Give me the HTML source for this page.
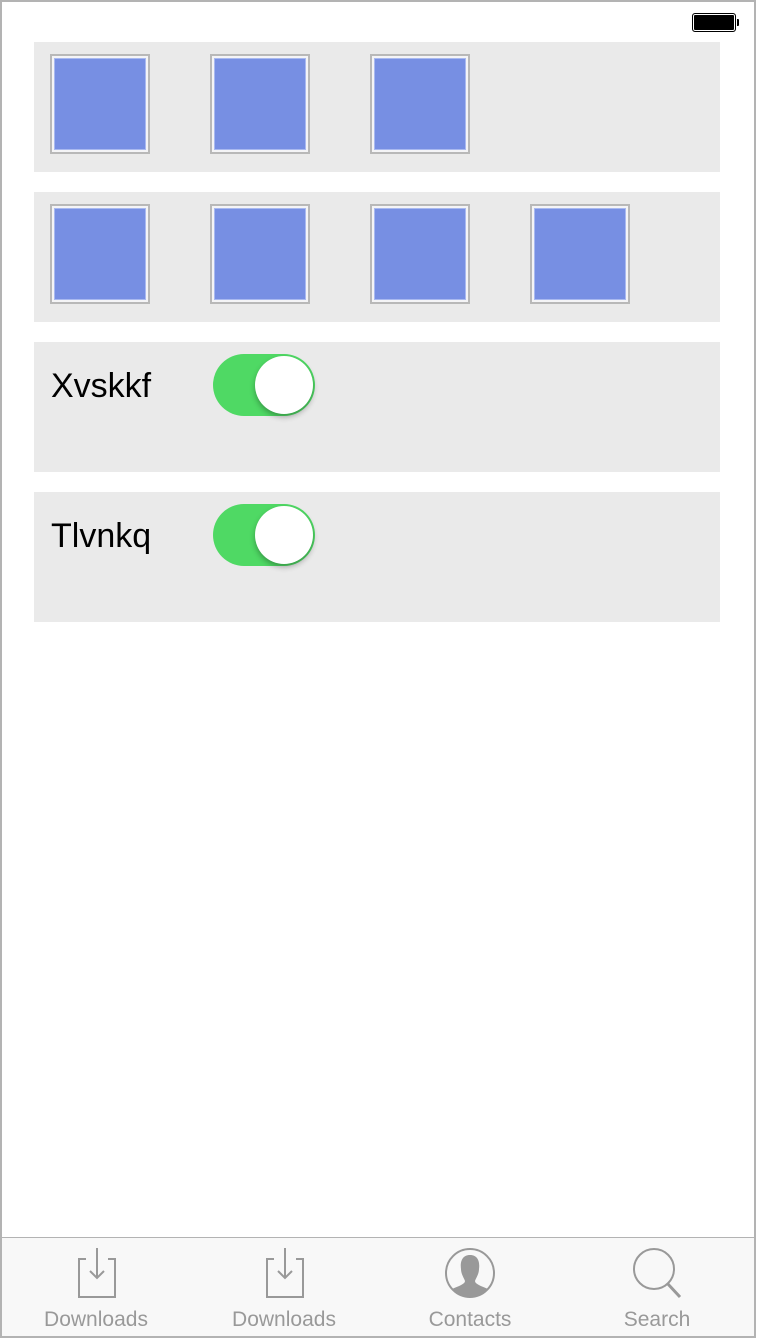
<!DOCTYPE html>
<html><head><style>
*{margin:0;padding:0;box-sizing:border-box}
body{width:760px;height:1340px;background:#fff;font-family:"Liberation Sans",sans-serif;position:relative;overflow:hidden}
.frame{position:absolute;left:0;top:0;width:756px;height:1338px;border:2px solid #b3b3b3}
.panel{position:absolute;left:34px;width:686px;height:130px;background:#eaeaea}
.sq{position:absolute;width:100px;height:100px;border:2px solid #b8b8b8;background:#f4f4f6;padding:2px}
.sq div{width:100%;height:100%;background:#778fe3;border:1px solid #a9b9f0}
.lbl{position:absolute;left:17px;top:25px;font-size:34px;color:#000}
.tog{position:absolute;left:179px;top:12px;width:102px;height:62px;border-radius:31px;background:#4fd964}
.knob{position:absolute;right:2px;top:2px;width:58px;height:58px;border-radius:50%;background:#fff;box-shadow:0 3px 6px rgba(0,0,0,.3)}
.tab{position:absolute;left:2px;top:1237px;width:752px;height:99px;background:#f8f8f8;border-top:1px solid #b3b3b3}
.t{position:absolute;top:70px;width:160px;margin-left:-80px;text-align:center;font-size:21px;color:#999}
.batt{position:absolute;left:692px;top:13px;width:44px;height:19px;border:1px solid #000;border-radius:3px;background:#000;box-shadow:inset 0 0 0 1px #fff}
.batt:after{content:"";position:absolute;right:-4px;top:5px;width:2px;height:7px;background:#000;border-radius:0 1px 1px 0}
</style></head><body>
<div class="frame"></div>
<div class="batt"></div>
<div class="panel" style="top:42px">
<div class="sq" style="left:16px;top:12px"><div></div></div>
<div class="sq" style="left:176px;top:12px"><div></div></div>
<div class="sq" style="left:336px;top:12px"><div></div></div>
</div>
<div class="panel" style="top:192px">
<div class="sq" style="left:16px;top:12px"><div></div></div>
<div class="sq" style="left:176px;top:12px"><div></div></div>
<div class="sq" style="left:336px;top:12px"><div></div></div>
<div class="sq" style="left:496px;top:12px"><div></div></div>
</div>
<div class="panel" style="top:342px"><div class="lbl">Xvskkf</div><div class="tog"><div class="knob"></div></div></div>
<div class="panel" style="top:492px"><div class="lbl">Tlvnkq</div><div class="tog"><div class="knob"></div></div></div>
<div class="tab">
<svg style="position:absolute;left:0;top:0" width="752" height="99">
<g fill="none" stroke="#999" stroke-width="2">
<path d="M84 21h-7v38h36v-38h-7M95 10v30M88 33l7 7 7-7"/>
<path d="M272 21h-7v38h36v-38h-7M283 10v30M276 33l7 7 7-7"/>
<circle cx="468" cy="35" r="24"/>
<circle cx="652" cy="31" r="20"/><path d="M665 45l13 14" stroke-width="3"/>
</g>
<path d="M468 17c-8 0-10 7-9 14 0 5 3 9 4 12 0 3-6 5-13 8a24 24 0 0 0 36 0c-7-3-13-5-13-8 1-3 4-7 4-12 1-7-1-14-9-14z" fill="#999"/>
</svg>
<div class="t" style="left:94px">Downloads</div>
<div class="t" style="left:282px">Downloads</div>
<div class="t" style="left:468px">Contacts</div>
<div class="t" style="left:655px">Search</div>
</div>
</body></html>
